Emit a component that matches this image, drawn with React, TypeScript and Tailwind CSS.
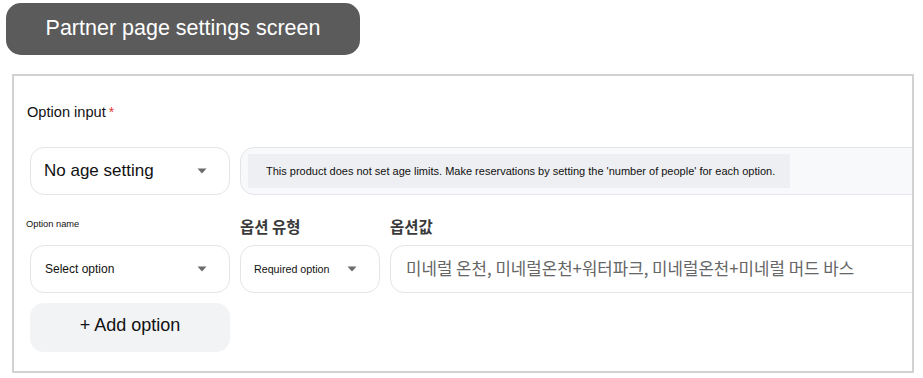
import React from "react";

const Caret = () => (
  <svg width="10" height="6" viewBox="0 0 10 6" className="shrink-0">
    <path d="M0.5 0.5 L9.5 0.5 L5 5.5 Z" fill="#6b6b6b" />
  </svg>
);

export default function App() {
  const sans = { fontFamily: '"Liberation Sans", Arial, sans-serif' };
  const kr = { fontFamily: '"Noto Sans CJK KR", "Noto Sans", sans-serif' };
  return (
    <div className="w-[923px] h-[378px] bg-white relative overflow-hidden" style={sans}>
      <div className="pt-[3px] pl-[6px]">
        <div className="w-[354px] h-[52px] rounded-[15px] bg-[#5b5b5b] flex items-center justify-center text-white text-[21.5px] pb-[2px]">
          Partner page settings screen
        </div>
      </div>
      <div className="mt-[19px] ml-[12px] w-[902px] h-[299px] border-2 border-[#d2d2d2] overflow-hidden">
        <div className="pl-[13px] pt-[26px] text-[14.6px] text-[#111] leading-[20px] flex">
          Option input<span className="text-[#e53935] ml-[3px] text-[14px]">*</span>
        </div>
        <div className="flex gap-[10px] pl-[16px] mt-[25px] mr-[-40px]">
          <div className="w-[200px] h-[48px] shrink-0 rounded-[14px] border border-[#e3e5e9] flex items-center justify-between pl-[13px] pr-[22px] text-[17px] text-[#111]">
            <span>No age setting</span>
            <Caret />
          </div>
          <div className="flex-1 h-[48px] rounded-[14px] border border-[#e3e5e9] bg-[#f8f9fa] flex items-center pl-[7px]">
            <div className="w-[542px] h-[34px] bg-[#eeeff2] flex items-center pl-[18px] text-[11px] text-[#111]">
              This product does not set age limits. Make reservations by setting the 'number of people' for each option.
            </div>
          </div>
        </div>
        <div className="flex gap-[10px] pl-[12px] mt-[23px] h-[14px] items-center">
          <div className="w-[204px] text-[9.3px] text-[#111]">Option name</div>
          <div className="w-[140px] text-[15.5px] font-bold text-[#3a3a3a] pt-[3px]" style={kr}>옵션 유형</div>
          <div className="text-[15.5px] font-bold text-[#3a3a3a] pt-[3px]" style={kr}>옵션값</div>
        </div>
        <div className="flex gap-[10px] pl-[16px] mt-[13px] mr-[-40px]">
          <div className="w-[200px] h-[48px] shrink-0 rounded-[14px] border border-[#e3e5e9] flex items-center justify-between pl-[14px] pr-[22px] text-[12px] text-[#111]">
            <span>Select option</span>
            <Caret />
          </div>
          <div className="w-[140px] h-[48px] shrink-0 rounded-[14px] border border-[#e3e5e9] flex items-center justify-between pl-[13px] pr-[22px] text-[10.7px] text-[#111]">
            <span>Required option</span>
            <Caret />
          </div>
          <div className="flex-1 h-[48px] rounded-[14px] border border-[#e3e5e9] flex items-center pl-[15px] text-[16.8px] text-[#666]" style={kr}>
            미네럴 온천, 미네럴온천+워터파크, 미네럴온천+미네럴 머드 바스
          </div>
        </div>
        <div className="pl-[16px] mt-[10px]">
          <button className="w-[200px] h-[49px] rounded-[14px] bg-[#f2f3f5] flex items-center justify-center text-[18px] text-[#111] pb-[4px]">
            + Add option
          </button>
        </div>
      </div>
    </div>
  );
}
